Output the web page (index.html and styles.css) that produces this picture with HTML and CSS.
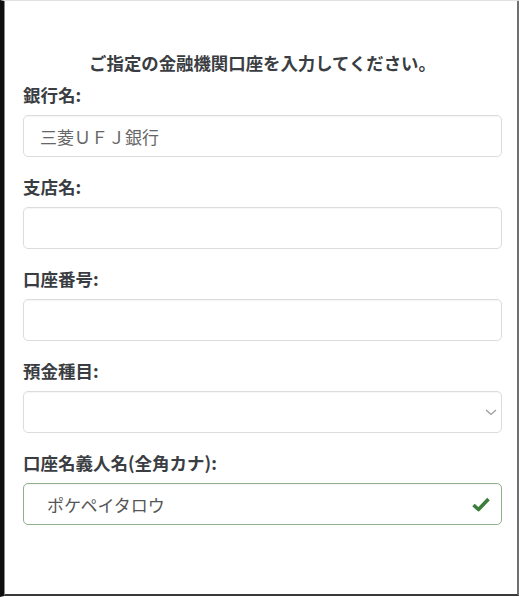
FILE: index.html
```html
<!DOCTYPE html>
<html lang="ja">
<head>
<meta charset="utf-8">
<title>口座入力</title>
<link rel="stylesheet" href="styles.css">
</head>
<body>
<div class="frame">
  <div class="inner">
    <h2 class="title">ご指定の金融機関口座を入力してください。</h2>
    <form class="form">
      <div class="field">
        <label class="label">銀行名:</label>
        <div class="control">三菱ＵＦＪ銀行</div>
      </div>
      <div class="field">
        <label class="label">支店名:</label>
        <div class="control"></div>
      </div>
      <div class="field">
        <label class="label">口座番号:</label>
        <div class="control"></div>
      </div>
      <div class="field">
        <label class="label">預金種目:</label>
        <div class="control select">
          <svg class="chev" width="12" height="7" viewBox="0 0 12 7"><path d="M1 1 L6 5.5 L11 1" fill="none" stroke="#9a9a9a" stroke-width="1.2"/></svg>
        </div>
      </div>
      <div class="field">
        <label class="label">口座名義人名(全角カナ):</label>
        <div class="control valid">
          <span class="kana">ポケペイタロウ</span>
          <svg class="check" width="18" height="15" viewBox="0 0 18 15"><path d="M1.5 8 L6.5 12.5 L16.5 2" fill="none" stroke="#3b7d3b" stroke-width="3.6" stroke-linejoin="round"/></svg>
        </div>
      </div>
    </form>
  </div>
</div>
</body>
</html>
```
FILE: styles.css
```css
* { box-sizing: border-box; }
html, body { margin: 0; padding: 0; background: #fff; }
body {
  font-family: "Noto Sans CJK JP", "Noto Sans", sans-serif;
  color: #333;
}
.frame {
  width: 520px;
  height: 597px;
  border-left: 4px solid #0f0f0f;
  border-right: 1px solid #fff;
  border-bottom: 1px solid #fff;
  border-top: 1px solid #e2e2e2;
  background: #fff;
}
.inner {
  height: 100%;
  border-left: 1px solid #8a8a8a;
  border-right: 2px solid #707070;
  border-bottom: 2px solid #3a3a3a;
  padding: 0 15px 0 18px;
}
.title {
  margin: 0;
  padding-top: 50px;
  font-size: 17.4px;
  font-weight: bold;
  line-height: 24px;
  text-align: center;
  color: #3a3d42;
}
.form {
  display: flex;
  flex-direction: column;
  gap: 18px;
  margin-top: 8px;
}
.field {
  display: flex;
  flex-direction: column;
  gap: 8px;
}
.label {
  font-size: 17.5px;
  font-weight: bold;
  line-height: 24px;
  color: #3a3d42;
}
.control {
  height: 42px;
  border: 1px solid #dcdcdc;
  border-radius: 5px;
  padding: 0 16px;
  display: flex;
  align-items: center;
  font-size: 17px;
  color: #666;
  box-shadow: inset 0 1px 1px rgba(0,0,0,0.04);
}
.select { justify-content: flex-end; padding-right: 4px; }
.chev { display: block; }
.valid {
  border-color: #8fb08f;
  justify-content: space-between;
  padding: 0 11px 0 23px;
}
.kana { color: #555; }
.check { display: block; }
```
